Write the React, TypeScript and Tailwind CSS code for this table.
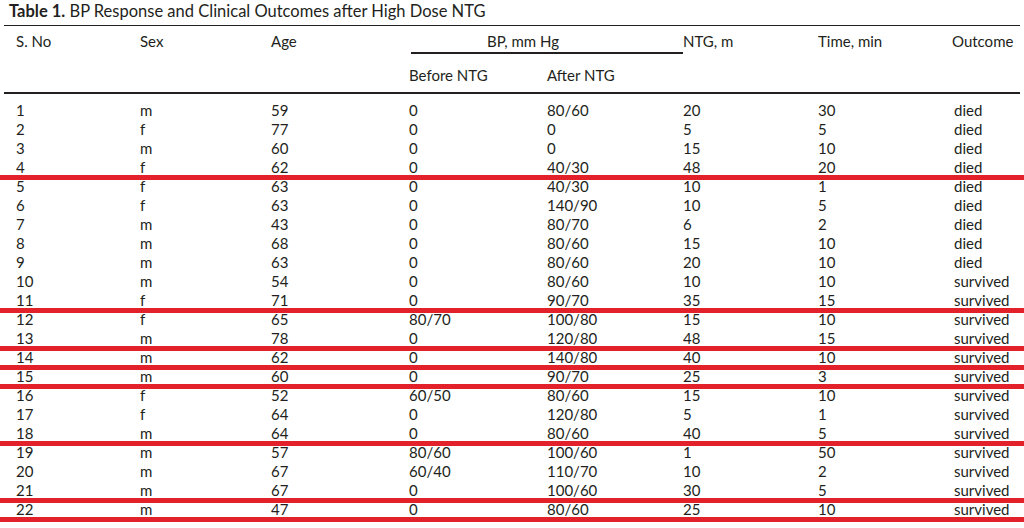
const rows: { n: string; sex: string; age: string; before: string; after: string; ntg: string; time: string; outcome: string; red?: boolean }[] = [
  { n: "1", sex: "m", age: "59", before: "0", after: "80/60", ntg: "20", time: "30", outcome: "died" },
  { n: "2", sex: "f", age: "77", before: "0", after: "0", ntg: "5", time: "5", outcome: "died" },
  { n: "3", sex: "m", age: "60", before: "0", after: "0", ntg: "15", time: "10", outcome: "died" },
  { n: "4", sex: "f", age: "62", before: "0", after: "40/30", ntg: "48", time: "20", outcome: "died", red: true },
  { n: "5", sex: "f", age: "63", before: "0", after: "40/30", ntg: "10", time: "1", outcome: "died" },
  { n: "6", sex: "f", age: "63", before: "0", after: "140/90", ntg: "10", time: "5", outcome: "died" },
  { n: "7", sex: "m", age: "43", before: "0", after: "80/70", ntg: "6", time: "2", outcome: "died" },
  { n: "8", sex: "m", age: "68", before: "0", after: "80/60", ntg: "15", time: "10", outcome: "died" },
  { n: "9", sex: "m", age: "63", before: "0", after: "80/60", ntg: "20", time: "10", outcome: "died" },
  { n: "10", sex: "m", age: "54", before: "0", after: "80/60", ntg: "10", time: "10", outcome: "survived" },
  { n: "11", sex: "f", age: "71", before: "0", after: "90/70", ntg: "35", time: "15", outcome: "survived", red: true },
  { n: "12", sex: "f", age: "65", before: "80/70", after: "100/80", ntg: "15", time: "10", outcome: "survived" },
  { n: "13", sex: "m", age: "78", before: "0", after: "120/80", ntg: "48", time: "15", outcome: "survived", red: true },
  { n: "14", sex: "m", age: "62", before: "0", after: "140/80", ntg: "40", time: "10", outcome: "survived", red: true },
  { n: "15", sex: "m", age: "60", before: "0", after: "90/70", ntg: "25", time: "3", outcome: "survived", red: true },
  { n: "16", sex: "f", age: "52", before: "60/50", after: "80/60", ntg: "15", time: "10", outcome: "survived" },
  { n: "17", sex: "f", age: "64", before: "0", after: "120/80", ntg: "5", time: "1", outcome: "survived" },
  { n: "18", sex: "m", age: "64", before: "0", after: "80/60", ntg: "40", time: "5", outcome: "survived", red: true },
  { n: "19", sex: "m", age: "57", before: "80/60", after: "100/60", ntg: "1", time: "50", outcome: "survived" },
  { n: "20", sex: "m", age: "67", before: "60/40", after: "110/70", ntg: "10", time: "2", outcome: "survived" },
  { n: "21", sex: "m", age: "67", before: "0", after: "100/60", ntg: "30", time: "5", outcome: "survived", red: true },
  { n: "22", sex: "m", age: "47", before: "0", after: "80/60", ntg: "25", time: "10", outcome: "survived", red: true },
];

const cols = "grid grid-cols-[140px_131px_138px_138px_136px_135px_136px_70px]";

export default function App() {
  return (
    <div className="w-[1024px] h-[528px] overflow-hidden bg-white text-[#231f20] font-['Lato',sans-serif] text-[15px] leading-[19px]">
      <div className="pl-[9px] pt-[2px] text-[16.5px]">
        <span className="font-bold">Table 1.</span> BP Response and Clinical Outcomes after High Dose NTG
      </div>
      <div className="mx-[4px] mt-[4px] h-px bg-[#231f20]" />

      {/* header */}
      <div className={`${cols} h-[29px] pt-[6px]`}>
        <div className="pl-[16px]">S. No</div>
        <div>Sex</div>
        <div>Age</div>
        <div className="col-span-2 pl-[2px]">
          <div className="pl-[76px]">BP, mm Hg</div>
          <div className="mt-px h-[2px] bg-[#231f20]" />
        </div>
        <div>NTG, m</div>
        <div>Time, min</div>
        <div className="-ml-[2px]">Outcome</div>
      </div>
      <div className={`${cols} h-[37px] pt-[11px]`}>
        <div />
        <div />
        <div />
        <div>Before NTG</div>
        <div>After NTG</div>
      </div>
      <div className="mx-[4px] h-[2px] bg-[#231f20]" />

      {/* body */}
      <div className="pt-[7px]">
        {rows.map((r) => (
          <div key={r.n} className={`${cols} relative h-[19px]`}>
            <div className="pl-[16px]">{r.n}</div>
            <div>{r.sex}</div>
            <div>{r.age}</div>
            <div>{r.before}</div>
            <div>{r.after}</div>
            <div>{r.ntg}</div>
            <div>{r.time}</div>
            <div>{r.outcome}</div>
            {r.red && <div className="absolute left-0 right-0 top-[17px] h-[5px] bg-[#e3212b]" />}
          </div>
        ))}
      </div>
    </div>
  );
}
